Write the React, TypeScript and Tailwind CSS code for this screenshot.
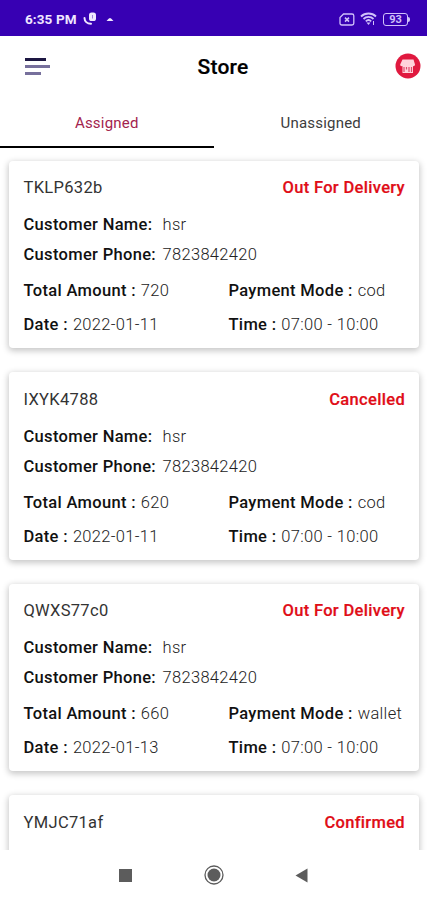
type Details = { customer: string; phone: string; amount: number; payment: string; date: string; time: string };
type Order = { id: string; status: string; details?: Details };

const ORDERS: Order[] = [
  { id: "TKLP632b", status: "Out For Delivery", details: { customer: "hsr", phone: "7823842420", amount: 720, payment: "cod", date: "2022-01-11", time: "07:00 - 10:00" } },
  { id: "IXYK4788", status: "Cancelled", details: { customer: "hsr", phone: "7823842420", amount: 620, payment: "cod", date: "2022-01-11", time: "07:00 - 10:00" } },
  { id: "QWXS77c0", status: "Out For Delivery", details: { customer: "hsr", phone: "7823842420", amount: 660, payment: "wallet", date: "2022-01-13", time: "07:00 - 10:00" } },
  { id: "YMJC71af", status: "Confirmed" },
];

function StatusBar() {
  return (
    <div className="h-[35.5px] shrink-0 bg-[#3700b3] flex items-center justify-between pl-[25px] pr-[17px] pt-[3px]">
      <div className="flex items-center text-[#efe6ff]">
        <span className="w-[58px] text-[13.5px] font-bold tracking-[0.1px] whitespace-nowrap">6:35 PM</span>
        <svg className="w-[14px] h-[14px]" viewBox="0 0 14 14" fill="none">
          <path d="M1.5 6C1.5 9 4 11.7 8 11.8" stroke="currentColor" strokeWidth="2" strokeLinecap="round" />
          <rect x="6" y="0.5" width="7" height="8.5" rx="2.6" fill="currentColor" />
          <path d="M9.5 3v3.5" stroke="#9c80dc" strokeWidth="1" />
        </svg>
        <svg className="w-[8px] h-[5px] ml-[9px]" viewBox="0 0 8 5">
          <path d="M0.5 4C1.5 3.5 2.5 1 4 1s2.5 2.5 3.5 3z" fill="currentColor" />
        </svg>
      </div>
      <div className="flex items-center text-[#d0c0fa]">
        <svg className="w-[16px] h-[13px]" viewBox="0 0 16 13" fill="none" stroke="currentColor">
          <path d="M4.5 1H13a1.8 1.8 0 0 1 1.8 1.8v7.4A1.8 1.8 0 0 1 13 12H2.8A1.8 1.8 0 0 1 1 10.2V4.5z" strokeWidth="1.3" />
          <path d="M6 4.6l4 4M10 4.6l-4 4" strokeWidth="1.5" />
        </svg>
        <svg className="w-[17px] h-[14px] ml-[5px]" viewBox="0 0 17 14" fill="none" stroke="currentColor" strokeWidth="1.8">
          <path d="M1 4.5C5 0.5 12 0.5 16 4.5M3.5 7C6.3 4.2 10.7 4.2 13.5 7M5.8 9.3C7.4 7.8 9.6 7.8 11.2 9.3" />
          <path d="M6.5 10.5h4l-2 2.5z" fill="currentColor" stroke="none" />
          <path d="M13.5 9v4" strokeWidth="1" />
        </svg>
        <div className="ml-[6px] w-[25px] h-[13px] rounded-[3px] border-[1.5px] border-current flex items-center justify-center text-[11px] font-bold leading-none">93</div>
        <div className="w-[2px] h-[5px] rounded-r bg-current" />
      </div>
    </div>
  );
}

function Header() {
  return (
    <header className="h-[62px] shrink-0 flex items-center justify-between pl-[25px] pr-[6px]">
      <div className="w-[27px] flex flex-col gap-[4px]">
        <div className="w-[21px] h-[2.5px] bg-[#1d1742]" />
        <div className="w-[25px] h-[3px] bg-[#77709c]" />
        <div className="w-[16px] h-[3px] bg-[#77709c]" />
      </div>
      <h1 className="text-[21px] font-medium tracking-[0.2px] text-black pt-[3px] [-webkit-text-stroke:0.2px_black]">Store</h1>
      <svg className="w-[27px] h-[27px]" viewBox="0 0 27 27">
        <circle cx="14" cy="13" r="12.5" fill="#e0193f" />
        <path d="M8.5 6.5h11l1.5 5c0 1.5-1.5 2-2 1.5v7H8.5v-7c-1 .5-2.5 0-2.3-1.5z" fill="#ffd3db" />
        <path d="M10 14v5M12.5 14v2.5M15 14v5M17.5 14v5" stroke="#e0496a" strokeWidth="1.2" />
      </svg>
    </header>
  );
}

function Tabs() {
  return (
    <div className="h-[51px] shrink-0 grid grid-cols-2 text-center text-[15px] leading-[51px] tracking-[0.2px]">
      <div className="h-[50.5px] border-b-2 border-black text-[#a3234e]">Assigned</div>
      <div className="text-[#3c3c3c] pl-px">Unassigned</div>
    </div>
  );
}

function Field({ label, value }: { label: string; value: string | number }) {
  return (
    <div className="flex gap-[5px] whitespace-nowrap">
      <span className="font-medium text-[#111]">{label}</span>
      <span className="font-light text-[#222]">{value}</span>
    </div>
  );
}

function OrderDetails({ details }: { details: Details }) {
  return (
    <>
      <div className="leading-[30px] mt-[10px]">
        <div className="flex">
          <span className="w-[139px] font-medium text-[#111]">Customer Name:</span>
          <span className="font-light text-[#222]">{details.customer}</span>
        </div>
        <div className="flex">
          <span className="w-[139px] font-medium text-[#111]">Customer Phone:</span>
          <span className="font-light text-[#222]">{details.phone}</span>
        </div>
      </div>
      <div className="grid grid-cols-[205px_1fr] leading-[34px] mt-[4px]">
        <Field label="Total Amount :" value={details.amount} />
        <Field label="Payment Mode :" value={details.payment} />
        <Field label="Date :" value={details.date} />
        <Field label="Time :" value={details.time} />
      </div>
    </>
  );
}

function OrderCard({ order }: { order: Order }) {
  return (
    <div className="h-[187.5px] shrink-0 rounded-[4px] bg-white pl-[14.5px] pr-[14px] pt-[15.2px] text-[16.5px] tracking-[0.32px] shadow-[0_2px_6px_1px_rgba(0,0,0,0.22)]">
      <div className="flex justify-between leading-[24px]">
        <span className="text-[#333]">{order.id}</span>
        <span className="font-medium text-[#e00d17] [-webkit-text-stroke:0.2px_#e00d17]">{order.status}</span>
      </div>
      {order.details && <OrderDetails details={order.details} />}
    </div>
  );
}

function NavBar() {
  return (
    <nav className="h-[50px] shrink-0 relative bg-white flex items-center pl-[119px] text-[#5c5c5c]">
      <div className="w-[13px] h-[13px] bg-current" />
      <svg className="w-[20px] h-[20px] ml-[72px]" viewBox="0 0 20 20">
        <circle cx="10" cy="10" r="9" fill="none" stroke="currentColor" strokeWidth="1.3" />
        <circle cx="10" cy="10" r="6.5" fill="currentColor" />
      </svg>
      <svg className="w-[13px] h-[15px] ml-[71px]" viewBox="0 0 13 15">
        <path d="M0.5 7.5L12.5 0.5v14z" fill="currentColor" />
      </svg>
    </nav>
  );
}

export default function App() {
  return (
    <div className="w-[427px] h-[900px] flex flex-col overflow-hidden bg-white font-['Roboto',sans-serif]">
      <StatusBar />
      <Header />
      <Tabs />
      <main className="flex-1 min-h-0 overflow-hidden flex flex-col gap-[24px] pt-[12.4px] pl-[9px] pr-[8px]">
        {ORDERS.map((order) => (
          <OrderCard key={order.id} order={order} />
        ))}
      </main>
      <NavBar />
    </div>
  );
}
